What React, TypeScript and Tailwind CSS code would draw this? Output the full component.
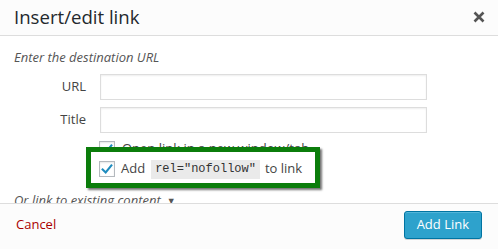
const Check = () => (
  <svg viewBox="0 0 16 16" className="w-[14px] h-[14px]">
    <path d="M3 8.5 L6.5 12 L13 4" fill="none" stroke="#1e8cbe" strokeWidth="2.4" strokeLinecap="square" />
  </svg>
);

function Checkbox() {
  return (
    <span className="w-4 h-4 shrink-0 border border-[#b4b9be] bg-white flex items-center justify-center shadow-[inset_0_1px_2px_rgba(0,0,0,0.1)]">
      <Check />
    </span>
  );
}

export default function App() {
  return (
    <div className="w-[498px] h-[249px] bg-white flex flex-col overflow-hidden font-['Open_Sans',sans-serif] text-[13px] text-[#444]">
      {/* Шапка */}
      <div className="h-[36px] shrink-0 bg-[#fcfcfc] border-b border-[#dddddd] flex items-center justify-between pl-[14px] pr-[13px]">
        <h1 className="text-[18.6px] text-[#23282d] leading-none -mt-[1px]">Insert/edit link</h1>
        <svg viewBox="0 0 12 12" className="w-[12px] h-[12px] -mt-[1px]">
          <path d="M1.5 1.5 L10.5 10.5 M10.5 1.5 L1.5 10.5" stroke="#555" strokeWidth="2.6" />
        </svg>
      </div>

      {/* Тело */}
      <div className="flex-1 overflow-hidden px-[14px] pt-[12px]">
        <p className="italic text-[#555] leading-[18px]">Enter the destination URL</p>
        <div className="mt-[8px] grid grid-cols-[72px_327px] gap-x-[14px] gap-y-[7px] items-center">
          <label className="text-right text-[#444]">URL</label>
          <div className="h-[26px] border border-[#dddddd] bg-white shadow-[inset_0_1px_2px_rgba(0,0,0,0.07)]" />
          <label className="text-right text-[#444]">Title</label>
          <div className="h-[26px] border border-[#dddddd] bg-white shadow-[inset_0_1px_2px_rgba(0,0,0,0.07)]" />
        </div>
        <div className="ml-[85px] mt-[8px] flex flex-col gap-[4px]">
          <div className="flex items-center gap-[7px] h-[16px]">
            <Checkbox />
            <span>Open link in a new window/tab</span>
          </div>
          <div className="relative flex items-center gap-[7px] h-[16px]">
            <div className="absolute left-[-13px] top-[-14px] w-[234px] h-[41px] border-[5px] border-[#0b7d0b] bg-white shadow-[2px_2px_2px_rgba(0,0,0,0.55)]" />
            <span className="relative flex items-center gap-[6px]">
              <Checkbox />
              <span>Add</span>
              <code className="bg-[#eaeaea] px-[4px] h-[19px] flex items-center font-['Liberation_Mono',monospace] text-[12px] text-[#333]">rel="nofollow"</code>
              <span className="-ml-[1px]">to link</span>
            </span>
          </div>
        </div>
        <p className="mt-[14px] italic text-[#555] flex items-center gap-[6px]">
          Or link to existing content
          <span className="text-[9px] not-italic text-[#555]">▼</span>
        </p>
      </div>

      {/* Подвал */}
      <div className="h-[46px] shrink-0 bg-[#fcfcfc] border-t border-[#dddddd] flex items-center justify-between pl-[16px] pr-[16px]">
        <span className="text-[#a00] -mt-[3px]">Cancel</span>
        <button className="h-[28px] px-[12px] rounded-[3px] bg-[#2ea2cc] border border-[#0074a2] text-white text-[13px] shadow-[inset_0_1px_0_rgba(120,200,230,0.5),0_1px_0_rgba(0,0,0,0.15)] -mt-[3px]">
          Add Link
        </button>
      </div>
    </div>
  );
}
